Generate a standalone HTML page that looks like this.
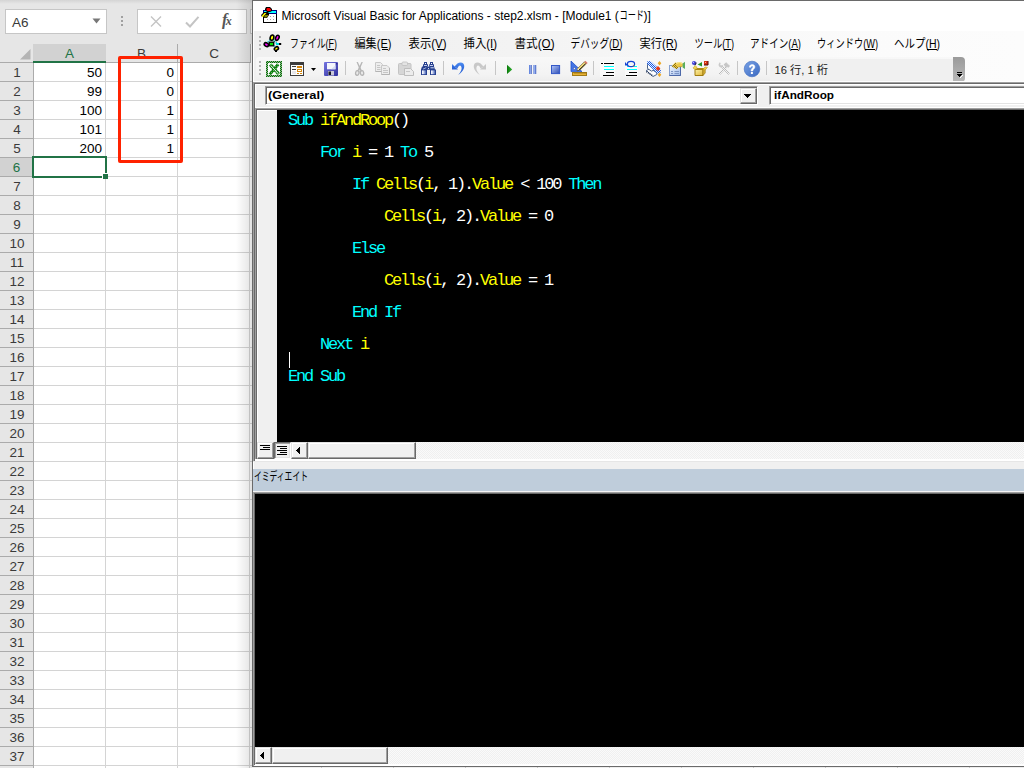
<!DOCTYPE html>
<html lang="en"><head><meta charset="utf-8"><title>Microsoft Visual Basic for Applications - step2.xlsm</title>
<style>
*{box-sizing:border-box;margin:0;padding:0}
html,body{width:1024px;height:768px;overflow:hidden;background:#e6e6e6;font-family:"Liberation Sans",sans-serif}
body{position:relative}
.a{position:absolute}
svg{position:absolute;overflow:visible}
/* Excel */
#xl{position:absolute;left:0;top:0;width:256px;height:768px;background:#e6e6e6;overflow:hidden}
#xl .topshade{position:absolute;left:0;top:0;width:256px;height:4px;background:linear-gradient(#d4d4d4,#e6e6e6)}
.box{position:absolute;background:#fff;border:1px solid #c6c6c6}
#namebox{left:5px;top:9px;width:102px;height:25px}
#namebox span{position:absolute;left:6px;top:4.5px;font-size:13.5px;line-height:16px;color:#3a3a3a}
#fxbox{left:137px;top:9px;width:110px;height:25px}
#fxin{left:250px;top:9px;width:20px;height:25px}
#grid{position:absolute;left:0;top:44px;width:252px;height:724px;background:#fff}
.colh{position:absolute;top:0;height:19px;background:#e6e6e6;color:#3a3a3a;font-size:13.5px;line-height:20px;text-align:center;border-right:1px solid #ababab;border-bottom:1px solid #ababab}
.colh.sel{background:#d2d2d2;color:#217346;border-bottom:2px solid #217346}
.rowh{position:absolute;left:0;width:34px;padding-left:1px;height:19px;background:#e6e6e6;color:#3a3a3a;font-size:13.5px;line-height:19px;text-align:center;border-right:1px solid #ababab;border-bottom:1px solid #ababab}
.rowh.sel{background:#d2d2d2;color:#217346;border-right:2px solid #217346}
.cell{position:absolute;height:19px;font-size:13.5px;line-height:19px;color:#000;text-align:right;padding-right:3px}
.hl{position:absolute;left:33px;width:219px;height:1px;background:#d4d4d4}
.vl{position:absolute;top:18px;width:1px;height:706px;background:#d4d4d4}
/* VBA */
#vba{position:absolute;left:252px;top:0;width:772px;height:768px;background:#f0f0f0;overflow:hidden}
#vba .bl{position:absolute;left:0;top:0;width:1px;height:766px;background:#6a6a6a}
#vba .bt{position:absolute;left:0;top:0;width:772px;height:1px;background:#6a6a6a}
#title{position:absolute;left:1px;top:1px;width:771px;height:30px;background:#fff}
#title .t{position:absolute;left:29px;top:7px;font-size:12px;line-height:16px;color:#000;white-space:nowrap}
#menubar{position:absolute;left:1px;top:31px;width:771px;height:26px;background:linear-gradient(to right,#f0f0f0 0,#f0f0f0 120px,#fbfbfb 620px,#fcfcfc 771px)}
#tbrow{position:absolute;left:1px;top:57px;width:771px;height:25px;background:linear-gradient(to right,#f0f0f0 0,#f0f0f0 120px,#fbfbfb 620px,#fcfcfc 771px)}
#toolbar{position:absolute;left:3px;top:0;width:697px;height:25px;background:linear-gradient(#f8f8f8,#f3f3f3 70%,#ececec);border-radius:3px 0 0 3px}
#tbend{position:absolute;left:700px;top:0;width:12px;height:25px;background:linear-gradient(#9a9a9a,#b9b9b9);border-radius:0 4px 4px 0}
#status{position:absolute;left:517px;top:2px;width:183px;height:22px;background:#f0f0f0}
.dot{position:absolute;width:2px;height:2px;background:#b4b4b4}
.sep{position:absolute;width:1px;height:14px;background:#c6c6c6;top:4px}
.mi{position:absolute;top:5px;height:16px;font-size:12px;line-height:16px;color:#000;white-space:nowrap}
.mi u{text-decoration:underline}
/* code window */
#cw{position:absolute;left:1px;top:82px;width:771px;height:377px;background:#f0f0f0}
.combo{position:absolute;height:19px;background:#fff;border-top:1px solid #a0a0a0;border-left:1px solid #a0a0a0;border-bottom:1px solid #fff;border-right:1px solid #fff;box-shadow:inset 1px 1px 0 #696969,inset -1px -1px 0 #e3e3e3}
.combo b{position:absolute;left:2px;top:0.5px;transform-origin:0 0;font-size:11px;line-height:14px;color:#000;white-space:nowrap}
.btn3d{position:absolute;background:#f0f0f0;border:1px solid;border-color:#e3e3e3 #696969 #696969 #e3e3e3;box-shadow:inset -1px -1px 0 #a0a0a0,inset 1px 1px 0 #fff}
#code{position:absolute;width:747px;height:332px;background:#000}
#margin{position:absolute;left:4px;top:28px;width:20px;height:332px;background:#f0f0f0}
#imm{position:absolute;left:1px;top:469px;width:771px;height:299px}
#immcap{position:absolute;left:0;top:0;width:771px;height:22px;background:#bfcddb}
#immblack{position:absolute;left:2px;top:25px;width:769px;height:253px;background:#000}
.track{background-color:#fafafa;background-image:linear-gradient(45deg,#f0f0f0 25%,transparent 25%,transparent 75%,#f0f0f0 75%),linear-gradient(45deg,#f0f0f0 25%,transparent 25%,transparent 75%,#f0f0f0 75%);background-size:2px 2px;background-position:0 0,1px 1px}
.tx{color:transparent;overflow:hidden;-webkit-user-select:none;user-select:none}
.tx u{text-decoration:none}
pre.src{position:absolute;left:11px;top:3px;margin:0;font-family:"Liberation Mono",monospace;font-size:17px;line-height:16px;letter-spacing:-2.2px;white-space:pre;color:#ffffff}
pre.src .k{color:#00ffff}
pre.src .v{color:#ffff00}
</style></head>
<body>
<div id="xl">
<div class="topshade"></div>
<div class="box" id="namebox"><span>A6</span></div>
<svg style="left:92px;top:18px" width="9" height="6" viewBox="0 0 9 6"><path d="M0.5 0.5h8l-4 5z" fill="#777"/></svg>
<div class="a" style="left:121px;top:16px;width:2px;height:2px;background:#a0a0a0"></div><div class="a" style="left:121px;top:20px;width:2px;height:2px;background:#a0a0a0"></div><div class="a" style="left:121px;top:24px;width:2px;height:2px;background:#a0a0a0"></div>
<div class="box" id="fxbox"></div><div class="box" id="fxin"></div>
<svg style="left:150px;top:16px" width="12" height="11" viewBox="0 0 12 11"><path d="M1 0.5L11 10.5M11 0.5L1 10.5" stroke="#c4c4c4" stroke-width="1.4" fill="none"/></svg>
<svg style="left:185px;top:16px" width="15" height="12" viewBox="0 0 15 12"><path d="M1 6.5L5 10.5L13.5 0.8" stroke="#c4c4c4" stroke-width="2" fill="none"/></svg>
<div class="a" style="left:222px;top:10px;font-family:'Liberation Serif',serif;font-style:italic;font-weight:bold;font-size:16px;line-height:20px;color:#555;letter-spacing:-1.5px">f<span style="font-size:12px">x</span></div>
<div id="grid">
<div class="hl" style="top:37px"></div><div class="hl" style="top:56px"></div><div class="hl" style="top:75px"></div><div class="hl" style="top:94px"></div><div class="hl" style="top:113px"></div><div class="hl" style="top:132px"></div><div class="hl" style="top:151px"></div><div class="hl" style="top:170px"></div><div class="hl" style="top:189px"></div><div class="hl" style="top:208px"></div><div class="hl" style="top:227px"></div><div class="hl" style="top:246px"></div><div class="hl" style="top:265px"></div><div class="hl" style="top:284px"></div><div class="hl" style="top:303px"></div><div class="hl" style="top:322px"></div><div class="hl" style="top:341px"></div><div class="hl" style="top:360px"></div><div class="hl" style="top:379px"></div><div class="hl" style="top:398px"></div><div class="hl" style="top:417px"></div><div class="hl" style="top:436px"></div><div class="hl" style="top:455px"></div><div class="hl" style="top:474px"></div><div class="hl" style="top:493px"></div><div class="hl" style="top:512px"></div><div class="hl" style="top:531px"></div><div class="hl" style="top:550px"></div><div class="hl" style="top:569px"></div><div class="hl" style="top:588px"></div><div class="hl" style="top:607px"></div><div class="hl" style="top:626px"></div><div class="hl" style="top:645px"></div><div class="hl" style="top:664px"></div><div class="hl" style="top:683px"></div><div class="hl" style="top:702px"></div><div class="hl" style="top:721px"></div><div class="hl" style="top:740px"></div>
<div class="vl" style="left:105px"></div><div class="vl" style="left:177px"></div><div class="vl" style="left:249px"></div>
<div class="colh" style="left:0;width:34px;border-right:1px solid #ababab"></div><svg style="left:19.5px;top:4.5px" width="10.5" height="10.5" viewBox="0 0 10 10"><path d="M10 0V10H0z" fill="#b4b4b4"/></svg><div class="colh sel" style="left:33px;width:73px;border-right:0">A</div><div class="colh" style="left:106px;width:72px">B</div><div class="colh" style="left:178px;width:73px">C</div>
<div class="rowh" style="top:19px">1</div><div class="rowh" style="top:38px">2</div><div class="rowh" style="top:57px">3</div><div class="rowh" style="top:76px">4</div><div class="rowh" style="top:95px">5</div><div class="rowh sel" style="top:114px">6</div><div class="rowh" style="top:133px">7</div><div class="rowh" style="top:152px">8</div><div class="rowh" style="top:171px">9</div><div class="rowh" style="top:190px">10</div><div class="rowh" style="top:209px">11</div><div class="rowh" style="top:228px">12</div><div class="rowh" style="top:247px">13</div><div class="rowh" style="top:266px">14</div><div class="rowh" style="top:285px">15</div><div class="rowh" style="top:304px">16</div><div class="rowh" style="top:323px">17</div><div class="rowh" style="top:342px">18</div><div class="rowh" style="top:361px">19</div><div class="rowh" style="top:380px">20</div><div class="rowh" style="top:399px">21</div><div class="rowh" style="top:418px">22</div><div class="rowh" style="top:437px">23</div><div class="rowh" style="top:456px">24</div><div class="rowh" style="top:475px">25</div><div class="rowh" style="top:494px">26</div><div class="rowh" style="top:513px">27</div><div class="rowh" style="top:532px">28</div><div class="rowh" style="top:551px">29</div><div class="rowh" style="top:570px">30</div><div class="rowh" style="top:589px">31</div><div class="rowh" style="top:608px">32</div><div class="rowh" style="top:627px">33</div><div class="rowh" style="top:646px">34</div><div class="rowh" style="top:665px">35</div><div class="rowh" style="top:684px">36</div><div class="rowh" style="top:703px">37</div><div class="rowh" style="top:722px">38</div>
<div class="cell" style="left:33px;top:19px;width:72px">50</div><div class="cell" style="left:106px;top:19px;width:71px">0</div><div class="cell" style="left:33px;top:38px;width:72px">99</div><div class="cell" style="left:106px;top:38px;width:71px">0</div><div class="cell" style="left:33px;top:57px;width:72px">100</div><div class="cell" style="left:106px;top:57px;width:71px">1</div><div class="cell" style="left:33px;top:76px;width:72px">101</div><div class="cell" style="left:106px;top:76px;width:71px">1</div><div class="cell" style="left:33px;top:95px;width:72px">200</div><div class="cell" style="left:106px;top:95px;width:71px">1</div>
<div class="a" style="left:32px;top:112px;width:75px;height:22px;border:2px solid #217346"></div><div class="a" style="left:102px;top:129px;width:6px;height:6px;background:#217346;border:1px solid #fff;border-right:0;border-bottom:0"></div>
</div>
<div class="a" style="left:118px;top:56px;width:65px;height:107px;border:3px solid #ff2200;border-radius:2px"></div>
<div class="a" style="left:236px;top:0;width:16px;height:768px;background:linear-gradient(to right,rgba(0,0,0,0),rgba(0,0,0,0.115))"></div>
</div>
<div id="vba">
<div id="title"><div class="t" style="left:28.6px">Microsoft Visual Basic for Applications - step2.xlsm - [Module1 (</div><div class="t" style="left:390.5px">)]</div><svg role="img" aria-label="コード" style="left:0;top:0" width="771" height="30" viewBox="253 1 771 30"><text x="619.5" y="20" font-size="12" fill="#000" textLength="24.5" lengthAdjust="spacingAndGlyphs" font-family="'Liberation Sans','Noto Sans CJK JP',sans-serif">コード</text></svg></div>
<div id="menubar"><div class="dot" style="left:6px;top:5px"></div><div class="dot" style="left:6px;top:9px"></div><div class="dot" style="left:6px;top:13px"></div><div class="dot" style="left:6px;top:17px"></div><svg role="img" aria-label="ファイル(F) 編集(E) 表示(V) 挿入(I) 書式(O) デバッグ(D) 実行(R) ツール(T) アドイン(A) ウィンドウ(W) ヘルプ(H)" style="left:0;top:0" width="771" height="26" viewBox="253 31 771 26"><g font-size="12" fill="#000" font-family="'Liberation Sans','Noto Sans CJK JP',sans-serif"><g aria-label="ファイル(F)"><text x="290" y="48" textLength="47" lengthAdjust="spacingAndGlyphs">ファイル(F)</text><rect fill="#000" x="328" y="49" width="6" height="1"/></g><g aria-label="編集(E)"><text x="354.5" y="48" textLength="37" lengthAdjust="spacingAndGlyphs">編集(E)</text><rect fill="#000" x="382" y="49" width="6" height="1"/></g><g aria-label="表示(V)"><text x="408.5" y="48" textLength="38" lengthAdjust="spacingAndGlyphs">表示(V)</text><rect fill="#000" x="437" y="49" width="7" height="1"/></g><g aria-label="挿入(I)"><text x="463.5" y="48" textLength="33.5" lengthAdjust="spacingAndGlyphs">挿入(I)</text><rect fill="#000" x="491" y="49" width="3" height="1"/></g><g aria-label="書式(O)"><text x="514.5" y="48" textLength="40" lengthAdjust="spacingAndGlyphs">書式(O)</text><rect fill="#000" x="543" y="49" width="9" height="1"/></g><g aria-label="デバッグ(D)"><text x="570.5" y="48" textLength="52" lengthAdjust="spacingAndGlyphs">デバッグ(D)</text><rect fill="#000" x="611" y="49" width="9" height="1"/></g><g aria-label="実行(R)"><text x="639.5" y="48" textLength="38" lengthAdjust="spacingAndGlyphs">実行(R)</text><rect fill="#000" x="667" y="49" width="8" height="1"/></g><g aria-label="ツール(T)"><text x="694.5" y="48" textLength="39.5" lengthAdjust="spacingAndGlyphs">ツール(T)</text><rect fill="#000" x="724" y="49" width="7" height="1"/></g><g aria-label="アドイン(A)"><text x="750" y="48" textLength="51" lengthAdjust="spacingAndGlyphs">アドイン(A)</text><rect fill="#000" x="791" y="49" width="7" height="1"/></g><g aria-label="ウィンドウ(W)"><text x="817" y="48" textLength="61" lengthAdjust="spacingAndGlyphs">ウィンドウ(W)</text><rect fill="#000" x="865" y="49" width="10" height="1"/></g><g aria-label="ヘルプ(H)"><text x="894" y="48" textLength="46" lengthAdjust="spacingAndGlyphs">ヘルプ(H)</text><rect fill="#000" x="927" y="49" width="10" height="1"/></g></g></svg></div>
<div id="tbrow"><div id="toolbar"></div><div id="status"></div><svg role="img" aria-label="16 行, 1 桁" style="left:0;top:0" width="771" height="25" viewBox="253 57 771 25"><text x="774.5" y="74" font-size="11" fill="#1a1a1a" textLength="53.5" lengthAdjust="spacingAndGlyphs" font-family="'Liberation Sans','Noto Sans CJK JP',sans-serif" xml:space="preserve">16 行, 1 桁</text></svg><div id="tbend"><div class="a" style="left:4px;top:15px;width:5px;height:1px;background:#000"></div><svg style="left:4px;top:17px" width="5" height="3" viewBox="0 0 5 3" shape-rendering="crispEdges"><path d="M0 0h5v1h-1v1h-1v1h-1v-1h-1v-1h-1z" fill="#000"/></svg><svg style="left:5px;top:18px" width="5" height="3" viewBox="0 0 5 3" shape-rendering="crispEdges"><path d="M4 0h1v1h-1v1h-1v1h-1v-1h1v-1h1z" fill="#fff"/></svg></div><div class="dot" style="left:6px;top:4px"></div><div class="dot" style="left:6px;top:8px"></div><div class="dot" style="left:6px;top:12px"></div><div class="dot" style="left:6px;top:16px"></div><div class="sep" style="left:92px"></div><div class="sep" style="left:190px"></div><div class="sep" style="left:242px"></div><div class="sep" style="left:340px"></div><div class="sep" style="left:484px"></div><div class="sep" style="left:513px"></div></div>
<div class="a" style="left:1px;top:31px;width:1px;height:51px;background:#fff"></div><div class="a" style="left:1px;top:81px;width:771px;height:1px;background:#fff"></div><div class="a" style="left:1px;top:82px;width:771px;height:1px;background:#a0a0a0"></div><div class="a" style="left:2px;top:83px;width:770px;height:1px;background:#696969"></div><div class="a" style="left:1px;top:83px;width:1px;height:378px;background:#a0a0a0"></div><div class="a" style="left:2px;top:84px;width:1px;height:377px;background:#696969"></div><div class="a" style="left:3px;top:84px;width:769px;height:24px;background:#f0f0f0"></div><div class="a" style="left:3px;top:84px;width:769px;height:1px;background:#fff"></div><div class="a" style="left:3px;top:84px;width:1px;height:24px;background:#fff"></div><div class="a" style="left:3px;top:107px;width:769px;height:1px;background:#fff"></div><div class="combo" style="left:13px;top:86px;width:493px"><b style="left:1.5px;transform:scaleX(1.166)">(General)</b><div class="btn3d" style="left:474px;top:1px;width:17px;height:16px"></div><svg style="left:478px;top:7px" width="7" height="4" viewBox="0 0 7 4" shape-rendering="crispEdges"><path d="M0 0h7v1h-1v1h-1v1h-1v1h-1v-1h-1v-1h-1v-1h-1z" fill="#000"/></svg></div><div class="combo" style="left:517px;top:86px;width:260px"><b style="left:3.5px;transform:scaleX(1.067)">ifAndRoop</b></div><div class="a" style="left:3px;top:108px;width:769px;height:1px;background:#a0a0a0"></div><div class="a" style="left:4px;top:109px;width:768px;height:1px;background:#696969"></div><div class="a" style="left:3px;top:109px;width:1px;height:350px;background:#a0a0a0"></div><div class="a" style="left:4px;top:110px;width:1px;height:349px;background:#696969"></div><div class="a" style="left:5px;top:110px;width:20px;height:332px;background:#f0f0f0"></div><div class="a" style="left:5px;top:110px;width:20px;height:1px;background:#fff"></div><div class="a" style="left:5px;top:110px;width:1px;height:332px;background:#fff"></div><div id="code" style="left:25px;top:110px"><pre class="src"><span class="k">Sub</span> <span class="v">ifAndRoop</span>()

    <span class="k">For</span> <span class="v">i</span> = 1 <span class="k">To</span> 5

        <span class="k">If</span> <span class="v">Cells</span>(<span class="v">i</span>, 1).<span class="v">Value</span> &lt; 100 <span class="k">Then</span>

            <span class="v">Cells</span>(<span class="v">i</span>, 2).<span class="v">Value</span> = 0

        <span class="k">Else</span>

            <span class="v">Cells</span>(<span class="v">i</span>, 2).<span class="v">Value</span> = 1

        <span class="k">End If</span>

    <span class="k">Next</span> <span class="v">i</span>

<span class="k">End Sub</span></pre><div class="a" style="left:12px;top:242px;width:1px;height:16px;background:#fff"></div></div><div class="a track" style="left:5px;top:442px;width:767px;height:17px"></div><div class="btn3d" style="left:5px;top:442px;width:17px;height:17px"></div><div class="btn3d" style="left:22px;top:442px;width:17px;height:17px;border-color:#696969 #fff #fff #696969;box-shadow:inset 1px 1px 0 #a0a0a0,inset -1px -1px 0 #e3e3e3"></div><div class="btn3d" style="left:39px;top:442px;width:17px;height:17px"></div><div class="btn3d" style="left:56px;top:442px;width:108px;height:17px"></div><svg style="left:0;top:442px" width="60" height="17" viewBox="-1 360 60 17" shape-rendering="crispEdges"><path fill="#000" d="M7 363h10v1h-10zM10 365h7v1h-7zM7 367h10v1h-10zM24 364h10v1h-10zM27 366h7v1h-7zM24 368h10v1h-10zM27 370h7v1h-7zM24 372h10v1h-10zM46 365h1v7h-1zM45 366h1v5h-1zM44 367h1v3h-1zM43 368h1v1h-1z"/></svg><div class="a" style="left:3px;top:459px;width:769px;height:2px;background:#fff"></div><div class="a" style="left:1px;top:461px;width:771px;height:1px;background:#e6e6e6"></div><div class="a" style="left:1px;top:462px;width:771px;height:7px;background:#f0f0f0"></div><div class="a" style="left:1px;top:462px;width:1px;height:7px;background:#fff"></div><div class="a" style="left:1px;top:469px;width:771px;height:22px;background:#bfcddb"></div><svg role="img" aria-label="イミディエイト" style="left:1px;top:469px" width="771" height="22" viewBox="253 469 771 22"><text x="254" y="481" font-size="12" fill="#000" textLength="54" lengthAdjust="spacingAndGlyphs" font-family="'Liberation Sans','Noto Sans CJK JP',sans-serif">イミディエイト</text></svg><div class="a" style="left:1px;top:491px;width:771px;height:1px;background:#f4f4f4"></div><div class="a" style="left:1px;top:492px;width:771px;height:1px;background:#a0a0a0"></div><div class="a" style="left:2px;top:493px;width:770px;height:1px;background:#696969"></div><div class="a" style="left:1px;top:493px;width:1px;height:273px;background:#a0a0a0"></div><div class="a" style="left:2px;top:494px;width:1px;height:271px;background:#696969"></div><div class="a" style="left:3px;top:494px;width:769px;height:253px;background:#000"></div><div class="a track" style="left:3px;top:747px;width:769px;height:17px"></div><div class="btn3d" style="left:3px;top:747px;width:17px;height:17px"></div><div class="btn3d" style="left:20px;top:747px;width:116px;height:17px"></div><svg style="left:0;top:747px" width="30" height="17" viewBox="252 747 30 17" shape-rendering="crispEdges"><path fill="#000" d="M263 752h1v7h-1zM262 753h1v5h-1zM261 754h1v3h-1zM260 755h1v1h-1z"/></svg><div class="a" style="left:3px;top:764px;width:769px;height:2px;background:#fff"></div><div class="a" style="left:0px;top:766px;width:772px;height:1px;background:#6a6a6a"></div><div class="a" style="left:0px;top:767px;width:772px;height:1px;background:#eeeeee"></div><div class="a" style="left:69px;top:767px;width:1px;height:1px;background:#c6c6c6"></div><div class="a" style="left:141px;top:767px;width:1px;height:1px;background:#c6c6c6"></div><div class="a" style="left:213px;top:767px;width:1px;height:1px;background:#c6c6c6"></div><div class="a" style="left:285px;top:767px;width:1px;height:1px;background:#c6c6c6"></div><div class="a" style="left:357px;top:767px;width:1px;height:1px;background:#c6c6c6"></div><div class="a" style="left:429px;top:767px;width:1px;height:1px;background:#c6c6c6"></div><div class="a" style="left:501px;top:767px;width:1px;height:1px;background:#c6c6c6"></div><div class="a" style="left:573px;top:767px;width:1px;height:1px;background:#c6c6c6"></div><div class="a" style="left:645px;top:767px;width:1px;height:1px;background:#c6c6c6"></div><div class="a" style="left:717px;top:767px;width:1px;height:1px;background:#c6c6c6"></div><svg style="left:0;top:0" width="772" height="90" viewBox="252 0 772 90"><defs><pattern id="dg" width="2" height="2" patternUnits="userSpaceOnUse"><rect width="2" height="2" fill="#9aa89a"/><rect width="1" height="1" fill="#008000"/><rect x="1" y="1" width="1" height="1" fill="#008000"/></pattern><pattern id="dg2" width="2" height="2" patternUnits="userSpaceOnUse"><rect width="2" height="2" fill="#0a840a"/><rect x="1" width="1" height="1" fill="#6c9c74"/></pattern><pattern id="db" width="2" height="2" patternUnits="userSpaceOnUse"><rect width="2" height="2" fill="#e8f0ff"/><rect width="1" height="1" fill="#1858e0"/><rect x="1" y="1" width="1" height="1" fill="#1858e0"/></pattern><pattern id="dy" width="2" height="2" patternUnits="userSpaceOnUse"><rect width="2" height="2" fill="#f4d040"/><rect width="1" height="1" fill="#80681c"/><rect x="1" y="1" width="1" height="1" fill="#80681c"/></pattern><pattern id="dgy" width="2" height="2" patternUnits="userSpaceOnUse"><rect width="2" height="2" fill="#f4f4f4"/><rect width="1" height="1" fill="#b8b8b8"/><rect x="1" y="1" width="1" height="1" fill="#b8b8b8"/></pattern><linearGradient id="gsave" x1="0" y1="0" x2="1" y2="1"><stop offset="0" stop-color="#7474e0"/><stop offset="1" stop-color="#30309c"/></linearGradient><linearGradient id="gstop" x1="0" y1="0" x2="1" y2="1"><stop offset="0" stop-color="#b4c8fa"/><stop offset="1" stop-color="#2c4cb4"/></linearGradient><linearGradient id="gbar" x1="0" y1="0" x2="1" y2="0"><stop offset="0" stop-color="#3c64d0"/><stop offset="0.45" stop-color="#a4bcf4"/><stop offset="1" stop-color="#2444b0"/></linearGradient><linearGradient id="ghelp" x1="0" y1="0" x2="1" y2="1"><stop offset="0" stop-color="#78a2e6"/><stop offset="1" stop-color="#3a68c0"/></linearGradient><linearGradient id="gbin" x1="0" y1="0" x2="1" y2="0"><stop offset="0" stop-color="#ffffff"/><stop offset="0.3" stop-color="#dfe4f8"/><stop offset="1" stop-color="#4866b4"/></linearGradient><linearGradient id="gsheet" x1="0" y1="0" x2="1" y2="1"><stop offset="0" stop-color="#f4f8ff"/><stop offset="1" stop-color="#9cb8e8"/></linearGradient><linearGradient id="gbox" x1="0" y1="0" x2="1" y2="1"><stop offset="0" stop-color="#fbf0a8"/><stop offset="1" stop-color="#e2b838"/></linearGradient><linearGradient id="gundo" x1="0" y1="0" x2="0" y2="1"><stop offset="0" stop-color="#4f8ef2"/><stop offset="0.5" stop-color="#2e6adc"/><stop offset="1" stop-color="#2a62d6"/></linearGradient><linearGradient id="gplay" x1="0" y1="0" x2="1" y2="0"><stop offset="0" stop-color="#0a7a0a"/><stop offset="1" stop-color="#30b030"/></linearGradient></defs><g shape-rendering="crispEdges"><rect x="263" y="10" width="14" height="13" fill="#000"/><rect x="264" y="14" width="12" height="8" fill="#fff"/><rect x="263" y="10" width="14" height="4" fill="#000080"/><rect x="264" y="11" width="12" height="2" fill="#00ffff"/><rect x="270" y="16" width="1" height="1" fill="#a0a0a0"/><rect x="273" y="16" width="1" height="1" fill="#a0a0a0"/><rect x="267" y="19" width="1" height="1" fill="#a0a0a0"/><rect x="270" y="19" width="1" height="1" fill="#a0a0a0"/><rect x="273" y="19" width="1" height="1" fill="#a0a0a0"/></g><path d="M266 7h4l2 2v2l-2 1h-3l-2-2v-1z" fill="#000"/><path d="M267 8h2.5l1.5 1.5v1l-1 .5h-2.5l-1.2-1.5z" fill="#ff0000"/><path d="M261 15l3-3h4l1 1v2l-2 3h-3l-1-1h-1z" fill="#000"/><path d="M262 15.5l2.5-2.5h2l-3.5 4h-1z" fill="#ffff00"/><path d="M265 15h3v1l-1.5 1.5h-2.5z" fill="#808000"/><g stroke="#00d8d8" stroke-width="1.8" stroke-dasharray="1 1"><path d="M266.5 43.5L270.5 39.5"/><path d="M273 39.5L277.5 44"/><path d="M273 44L275.5 47.5"/></g><path d="M272.5 40L275.5 42.5" stroke="#008080" stroke-width="1.8" stroke-dasharray="1 1"/><ellipse cx="272" cy="37.7" rx="1.8" ry="2.7" fill="#ffff00" stroke="#000" stroke-width="1.6" transform="rotate(15 272 37.7)"/><ellipse cx="277.3" cy="37.8" rx="1.6" ry="2.7" fill="#ff00ff" stroke="#000" stroke-width="1.6" transform="rotate(25 277.3 37.8)"/><ellipse cx="266.4" cy="44.6" rx="2.3" ry="1.7" fill="#ff00ff" stroke="#000" stroke-width="1.6" transform="rotate(30 266.4 44.6)"/><rect x="269.3" y="42.2" width="4.4" height="3.6" fill="#00e000" stroke="#000" stroke-width="1.3"/><path d="M276 43h3.2v2h-3.2z" fill="#00e0e0"/><rect x="279" y="43" width="2.2" height="2" fill="#000"/><ellipse cx="276.4" cy="48.6" rx="2.2" ry="1.6" fill="#ffff00" stroke="#000" stroke-width="1.6" transform="rotate(-35 276.4 48.6)"/><rect x="275" y="50.3" width="2" height="1.7" fill="#000"/><g shape-rendering="crispEdges"><rect x="266" y="61" width="16" height="16" fill="url(#dg)"/><rect x="268" y="63" width="12" height="12" fill="#fff"/></g><g stroke="url(#dg2)" stroke-linecap="butt" fill="none"><path d="M270.2 64.6L278.8 74.2" stroke-width="3.4"/><path d="M278.2 64.2L269.8 74.4" stroke-width="3"/></g><path d="M270.6 65.2L278.3 73.8" stroke="#fff" stroke-width="0.9"/><g shape-rendering="crispEdges"><rect x="290" y="62" width="14" height="14" fill="#3c3c3c"/><rect x="291" y="65" width="12" height="10" fill="#fdfdfd"/><rect x="292" y="66" width="4" height="1" fill="#3c3c3c"/><rect x="292" y="69" width="4" height="1" fill="#3c3c3c"/><rect x="292" y="71" width="4" height="3" fill="#e6e6ea"/><rect x="297" y="66" width="5" height="2" fill="#d4860c"/><rect x="297" y="69" width="5" height="3" fill="#d4860c"/><rect x="298" y="70" width="3" height="1" fill="#fff"/><rect x="297" y="73" width="2" height="1" fill="#d4860c"/><rect x="300" y="73" width="2" height="1" fill="#d4860c"/></g><path d="M311 68h5l-2.5 3z" fill="#000"/><rect x="324" y="62" width="14" height="14" rx="1" fill="url(#gsave)"/><rect x="327" y="63" width="8.5" height="6.3" fill="#f4f6fc"/><path d="M331 69.3h4.5v-4z" fill="#d4dcf4"/><rect x="328" y="71" width="6" height="4.5" fill="#c8c8d8"/><rect x="328.5" y="71.5" width="2.5" height="3.5" fill="#181828"/><rect x="336.3" y="63" width="1" height="1.5" fill="#20207c"/><g fill="#b6b6b6"><path d="M356.5 62h1.3l3.9 8l-1.5 1z"/><path d="M362.8 62h-1.3l-3.9 8l1.5 1z"/></g><g stroke="#b4b4b4" fill="#e9e9e9" stroke-width="1.3"><ellipse cx="357.3" cy="73" rx="1.7" ry="2.3" transform="rotate(12 357.3 73)"/><ellipse cx="362" cy="73" rx="1.7" ry="2.3" transform="rotate(-12 362 73)"/></g><g stroke="#c8c8c8" stroke-width="1" fill="#ededed"><path d="M375.5 62.5h5l2 2v7h-7z"/><path d="M381.5 65.5h5.5l2.5 2.5v6.5h-8z"/></g><path d="M375.5 71.5h6M389.5 68v6.5h-8" stroke="#b4b4b4" stroke-width="1" fill="none"/><g stroke="#c6c6c6" stroke-width="1"><path d="M377 65.5h3M377 67.5h3.5M377 69.5h3.5M383 68.5h3M383 70.5h5M383 72.5h5"/></g><rect x="398.5" y="63.5" width="12.5" height="11" rx="1" fill="#d6d6d6" stroke="#c4c4c4"/><rect x="402" y="62" width="5.5" height="3.5" rx="1" fill="#e4e4e4" stroke="#c0c0c0" stroke-width="0.8"/><path d="M404.5 68.5h6l3 3v4h-9z" fill="#ececec" stroke="#bdbdbd"/><path d="M406 71.5h4" stroke="#c8c8c8"/><g fill="#27408f"><path d="M424 62h3v2.3h1v2.2h-.8l-.2 2.9v5.6h-6v-5.6l1-2.9h1v-2.2h1z"/><path d="M430 62h3v2.3h1v2.2l1 2.9h1v5.6h-6v-5.6l-.8-2.9v-2.2h.8z"/><rect x="427" y="66.6" width="3.2" height="3.2"/></g><rect x="422" y="70.4" width="4" height="3.8" fill="url(#gbin)"/><rect x="431" y="70.4" width="4" height="3.8" fill="url(#gbin)"/><g fill="#fff"><rect x="425" y="63" width="1" height="1"/><rect x="431" y="63" width="1" height="1"/><rect x="428" y="68" width="1" height="1" opacity=".8"/></g><g fill="#d2dcf6"><rect x="424" y="65" width="3" height=".9"/><rect x="430" y="65" width="3" height=".9"/><path d="M423 68.8l3.2-1.6v.9l-3.2 1.5z"/><path d="M430.5 67.3h3.3v1h-3.3z"/></g><path d="M452 63.9V69.6H458Z" fill="url(#gundo)"/><path d="M454.6 66.6C457 62.4 461.2 61.2 463.3 63.6C465.6 66.4 463.6 71.4 458.3 74.9C461.4 71.5 462.4 68.4 461.1 66.3C460.1 64.8 458.5 65.6 457.4 68.6Z" fill="url(#gundo)"/><g fill="#c8c8c8" transform="translate(938 0) scale(-1 1)"><path d="M452 63.9V69.6H458Z"/><path d="M454.6 66.6C457 62.4 461.2 61.2 463.3 63.6C465.6 66.4 463.6 71.4 458.3 74.9C461.4 71.5 462.4 68.4 461.1 66.3C460.1 64.8 458.5 65.6 457.4 68.6Z"/></g><path d="M507 64.7v9.4l5.2-4.7z" fill="url(#gplay)"/><rect x="529" y="65" width="2.7" height="9" fill="url(#gbar)"/><rect x="533.5" y="65" width="2.7" height="9" fill="url(#gbar)"/><rect x="551.5" y="65.5" width="8.1" height="8.1" fill="url(#gstop)" stroke="#3458c8" stroke-width="1"/><path d="M571 61v10.6h11z" fill="#4474e4" stroke="#2454c8" stroke-width="0.8"/><circle cx="574.4" cy="68.4" r="1" fill="#fff" stroke="#1c3c98" stroke-width="0.5"/><path d="M577 70.8l.8-2.6l6.6-6.4l2 2l-6.6 6.4z" fill="#f0d878" stroke="#3a3010" stroke-width="0.5"/><path d="M584.2 62l1.3-1.2l2.2 2.2l-1.3 1.2z" fill="#d87c6c"/><path d="M577 70.8l.8-2.6l1.8 1.8z" fill="#f8f0e0"/><path d="M577 70.8l.5-1.2l.8.8z" fill="#222"/><path d="M578.5 70.5l7-6.8" stroke="#1c1c1c" stroke-width="0.9"/><rect x="572.5" y="72.5" width="14" height="3" fill="#eab434" stroke="#a07a18" stroke-width="1"/><path d="M575 72.5v1.5M577 72.5v1.5M579 72.5v1.5M581 72.5v1.5M583 72.5v1.5M585 72.5v1.5" stroke="#8a6410" stroke-width="0.7"/><g shape-rendering="crispEdges"><rect x="600" y="62" width="15" height="15" fill="#fff" opacity="0.55"/><rect x="601" y="63" width="2" height="1" fill="#000"/><rect x="604" y="63" width="10" height="1" fill="#000"/><rect x="604" y="66" width="10" height="1" fill="#00ffff"/><rect x="604" y="69" width="10" height="1" fill="#00ffff"/><rect x="606" y="72" width="8" height="1" fill="#000"/><rect x="603" y="75" width="11" height="1" fill="#000"/></g><g shape-rendering="crispEdges"><rect x="625" y="65" width="13" height="12" fill="#fff" opacity="0.55"/><rect x="627" y="66" width="10" height="1" fill="#00ffff"/><rect x="627" y="69" width="10" height="1" fill="#00ffff"/><rect x="629" y="72" width="8" height="1" fill="#000"/><rect x="626" y="75" width="11" height="1" fill="#000"/></g><ellipse cx="631" cy="64" rx="3.6" ry="2.7" fill="none" stroke="#1444d4" stroke-width="1.2"/><path d="M625 62v3.6h3.2z" fill="#1444d4"/><path d="M633 66.5l1.5-1" stroke="#c08020" stroke-width="1"/><path d="M646.3 70.5l4-2l6.5 4.2v1.8l-3.8 2z" fill="#fdfdff" stroke="#34507c" stroke-width="0.9"/><path d="M646.3 71.5l6.7 4.5" stroke="#1c2c4c" stroke-width="1.4" stroke-dasharray="1 1"/><path d="M647.5 62.5v6l4 2.6l3-1.2" fill="#fff" stroke="#34507c" stroke-width="0.9"/><path d="M647 61.5l3.4-.5l10.6 9.6l-.6 2.4l-3 .4l-10.4-9.6z" fill="url(#db)"/><path d="M659.5 61l1.8 2.2l-1.8 2.2l-1.8-2.2z" fill="#eca824"/><path d="M659.5 72.5l1.8 2.2l-1.8 2.2l-1.8-2.2z" fill="#eca824"/><path d="M658 66l2.4 2.5l-2.4 2.5l-2.4-2.5z" fill="#e83818"/><rect x="669.5" y="65.5" width="11" height="10" fill="url(#gsheet)" stroke="#86a0d0" stroke-width="1"/><path d="M669.5 75.5h11v-10" fill="none" stroke="#4c68a8" stroke-width="1"/><path d="M671 71.5h2M674.5 71.5h4.5M671 73.5h2M674.5 73.5h4.5" stroke="#7c94c4" stroke-width="1"/><path d="M671.5 66.2l4-4l4.2 3.8l-3 3.2z" fill="url(#dy)"/><ellipse cx="679.3" cy="64.6" rx="3.6" ry="2.5" fill="#ecc848"/><path d="M676.6 63.4c1.8-1 4-1 5.4 0" stroke="#fbeea0" stroke-width="1" fill="none"/><path d="M679 66.8c1.6.2 3-.2 3.8-1" stroke="#b89018" stroke-width="0.7" fill="none"/><path d="M685 61.8v7.2l-2.4-1.6v-4z" fill="#5cae5c"/><circle cx="694" cy="63" r="2.1" fill="#4444d8"/><path d="M694.4 65a2.1 2.1 0 0 0 1.6-2.6" stroke="#101040" stroke-width="1" fill="none"/><circle cx="693.4" cy="62.4" r=".6" fill="#c0c0ff"/><path d="M697.6 64.4l4.4-2.4v4.6z" fill="#22962a"/><rect x="704" y="61" width="4" height="4" fill="#d83414"/><path d="M704 65h4v-4" stroke="#500808" stroke-width="1" fill="none"/><rect x="705" y="62" width="1" height="1" fill="#ffb0a0"/><path d="M695 69.5h8v6h-8z" fill="url(#gbox)" stroke="#a07c10" stroke-width="1"/><path d="M703 69.5l2.2-1.5v5l-2.2 2.5z" fill="#dcb438" stroke="#9a7a14" stroke-width="0.7"/><path d="M695 69.5l2.2-1.5h8l-2.2 1.5z" fill="#b08a14"/><path d="M695 69.5l-2-1.6l2.2-2.2l2 1.8z" fill="#f4d850" stroke="#c09818" stroke-width="0.6"/><path d="M703 69.5l2-2.5l2.4.4l-2.2 2.6z" fill="#f4d850" stroke="#c09818" stroke-width="0.6"/><g stroke="url(#dgy)" fill="none" stroke-linecap="round"><path d="M720 73.5l6.5-7" stroke-width="2.2"/><path d="M728.5 73.5l-6.2-6.6" stroke-width="2.2"/></g><path d="M718.6 64.2c-.3 2.2 1.6 3.8 3.6 3l1.2-1.2l-1-1l-1.4.6l-.9-.9l.6-1.4l-1-1z" fill="#cacaca"/><path d="M723.6 64.6l2.6-2.4l4 3.6l-1.8 2l-1.2-1l-1 .9z" fill="#c6c6c6"/><path d="M726.4 62.6l3.4 3.2" stroke="#e6e6e6" stroke-width="0.8"/><circle cx="752" cy="69" r="7.8" fill="url(#ghelp)" stroke="#3e6cc0" stroke-width="0.6"/><path d="M749.3 67.2c0-3.6 5.6-3.6 5.6-.3c0 1.9-2.2 2.1-2.2 4.1h-1.7c0-2.6 2-2.8 2-4.1c0-1.3-2-1.3-2 .3z" fill="#fff" stroke="#fff" stroke-width="0.5"/><rect x="750.9" y="72" width="2" height="2" fill="#fff"/></svg><div class="bl"></div><div class="bt"></div>
</div>
</body></html>
